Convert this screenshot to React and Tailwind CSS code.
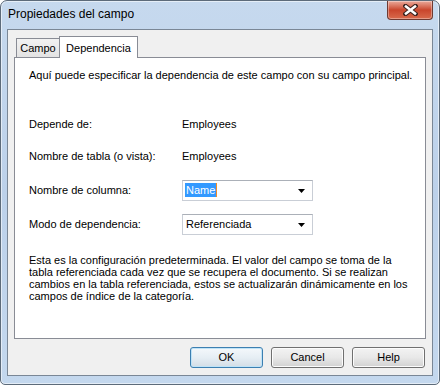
import React from 'react'

const font = { fontFamily: '"Liberation Sans", Arial, sans-serif' }

function CloseButton() {
  return (
    <div className="flex h-[19px] w-[46px] items-center justify-center rounded-b-[4px] border border-t-0 border-[#6e3a32] bg-gradient-to-b from-[#e9a99b] via-[#c9452c] to-[#d86a4c] shadow-[inset_0_0_0_1px_rgba(255,255,255,0.35)]">
      <svg width="15" height="12" viewBox="0 0 15 12">
        <path d="M2.5 2 L12.5 10 M12.5 2 L2.5 10" stroke="#3e2420" strokeWidth="4.5" strokeLinecap="square" />
        <path d="M3 2.5 L12 9.5 M12 2.5 L3 9.5" stroke="#ffffff" strokeWidth="2.5" strokeLinecap="square" />
      </svg>
    </div>
  )
}

function Combo({ children }) {
  return (
    <div className="flex h-[21px] w-[131px] items-center border border-[#c9ced6] border-t-[#abb0b8] bg-white pl-[2px] pr-[6px]">
      <div className="flex-1">{children}</div>
      <svg width="8" height="4" viewBox="0 0 8 4">
        <path d="M0 0 H7 L3.5 4 Z" fill="#000" />
      </svg>
    </div>
  )
}

function Button({ label, primary }) {
  return (
    <button
      type="button"
      className={
        'h-[21px] w-[73px] rounded-[3px] border text-[11px] text-black ' +
        (primary
          ? 'border-[#3c7fb1] bg-gradient-to-b from-[#f4f8fb] via-[#e6eef4] to-[#d3dde6] shadow-[inset_0_0_0_1px_#bfe3f7]'
          : 'border-[#707070] bg-gradient-to-b from-[#f3f3f3] via-[#e8e8e8] to-[#d2d2d2] shadow-[inset_0_0_0_1px_#fcfcfc]')
      }
    >
      {label}
    </button>
  )
}

export default function App() {
  return (
    <div className="h-[385px] w-[440px] bg-white" style={font}>
      <div className="flex h-[385px] w-[440px] flex-col rounded-t-[7px] rounded-b-[5px] border border-[#5d6b7a] bg-gradient-to-b from-[#c6d9ee] via-[#bcd1ea] to-[#c4d8ee] shadow-[inset_0_0_0_1px_rgba(255,255,255,0.55)]">
        <div className="flex h-[28px] items-start justify-between">
          <div className="pl-[7px] pt-[6px] text-[12px] leading-[15px] text-black">Propiedades del campo</div>
          <div className="mr-[6px]">
            <CloseButton />
          </div>
        </div>

        <div className="mx-[6px] flex h-[347px] flex-col border border-[#7a8796] bg-[#f0f0f0] px-[6px] pt-[6px] text-[11px] text-black">
          <div className="relative z-10 flex h-[21px] items-end pl-[2px]">
            <div className="flex h-[19px] w-[44px] items-center justify-center border border-b-0 border-[#898c95] bg-gradient-to-b from-[#f2f2f2] to-[#e3e3e3] pt-[1px]">
              Campo
            </div>
            <div className="-mb-px -ml-px flex h-[22px] w-[79px] items-start justify-center border border-b-0 border-[#898c95] bg-white pt-[3px]">
              Dependencia
            </div>
          </div>

          <div className="flex h-[282px] flex-col border border-[#898c95] bg-white pl-[14px] pt-[11px]">
            <div className="h-[13px] leading-[13px]">
              Aquí puede especificar la dependencia de este campo con su campo principal.
            </div>

            <div className="mt-[36px] flex h-[13px] leading-[13px]">
              <div className="w-[153px]">Depende de:</div>
              <div>Employees</div>
            </div>

            <div className="mt-[19px] flex h-[13px] leading-[13px]">
              <div className="w-[153px]">Nombre de tabla (o vista):</div>
              <div>Employees</div>
            </div>

            <div className="mt-[17px] flex h-[21px] items-center">
              <div className="w-[153px]">Nombre de columna:</div>
              <Combo>
                <span className="border-r border-[#f28c28] bg-[#3399ff] px-px py-[1px] text-white">Name</span>
              </Combo>
            </div>

            <div className="mt-[13px] flex h-[21px] items-center">
              <div className="w-[153px]">Modo de dependencia:</div>
              <Combo>
                <span className="pl-px">Referenciada</span>
              </Combo>
            </div>

            <p className="mt-[19px] leading-[12px]">
              Esta es la configuración predeterminada. El valor del campo se toma de la
              <br />
              tabla referenciada cada vez que se recupera el documento. Si se realizan
              <br />
              cambios en la tabla referenciada, estos se actualizarán dinámicamente en los
              <br />
              campos de índice de la categoría.
            </p>
          </div>

          <div className="mt-[8px] flex justify-end gap-[8px] pr-[1px]">
            <Button label="OK" primary />
            <Button label="Cancel" />
            <Button label="Help" />
          </div>
        </div>
      </div>
    </div>
  )
}
